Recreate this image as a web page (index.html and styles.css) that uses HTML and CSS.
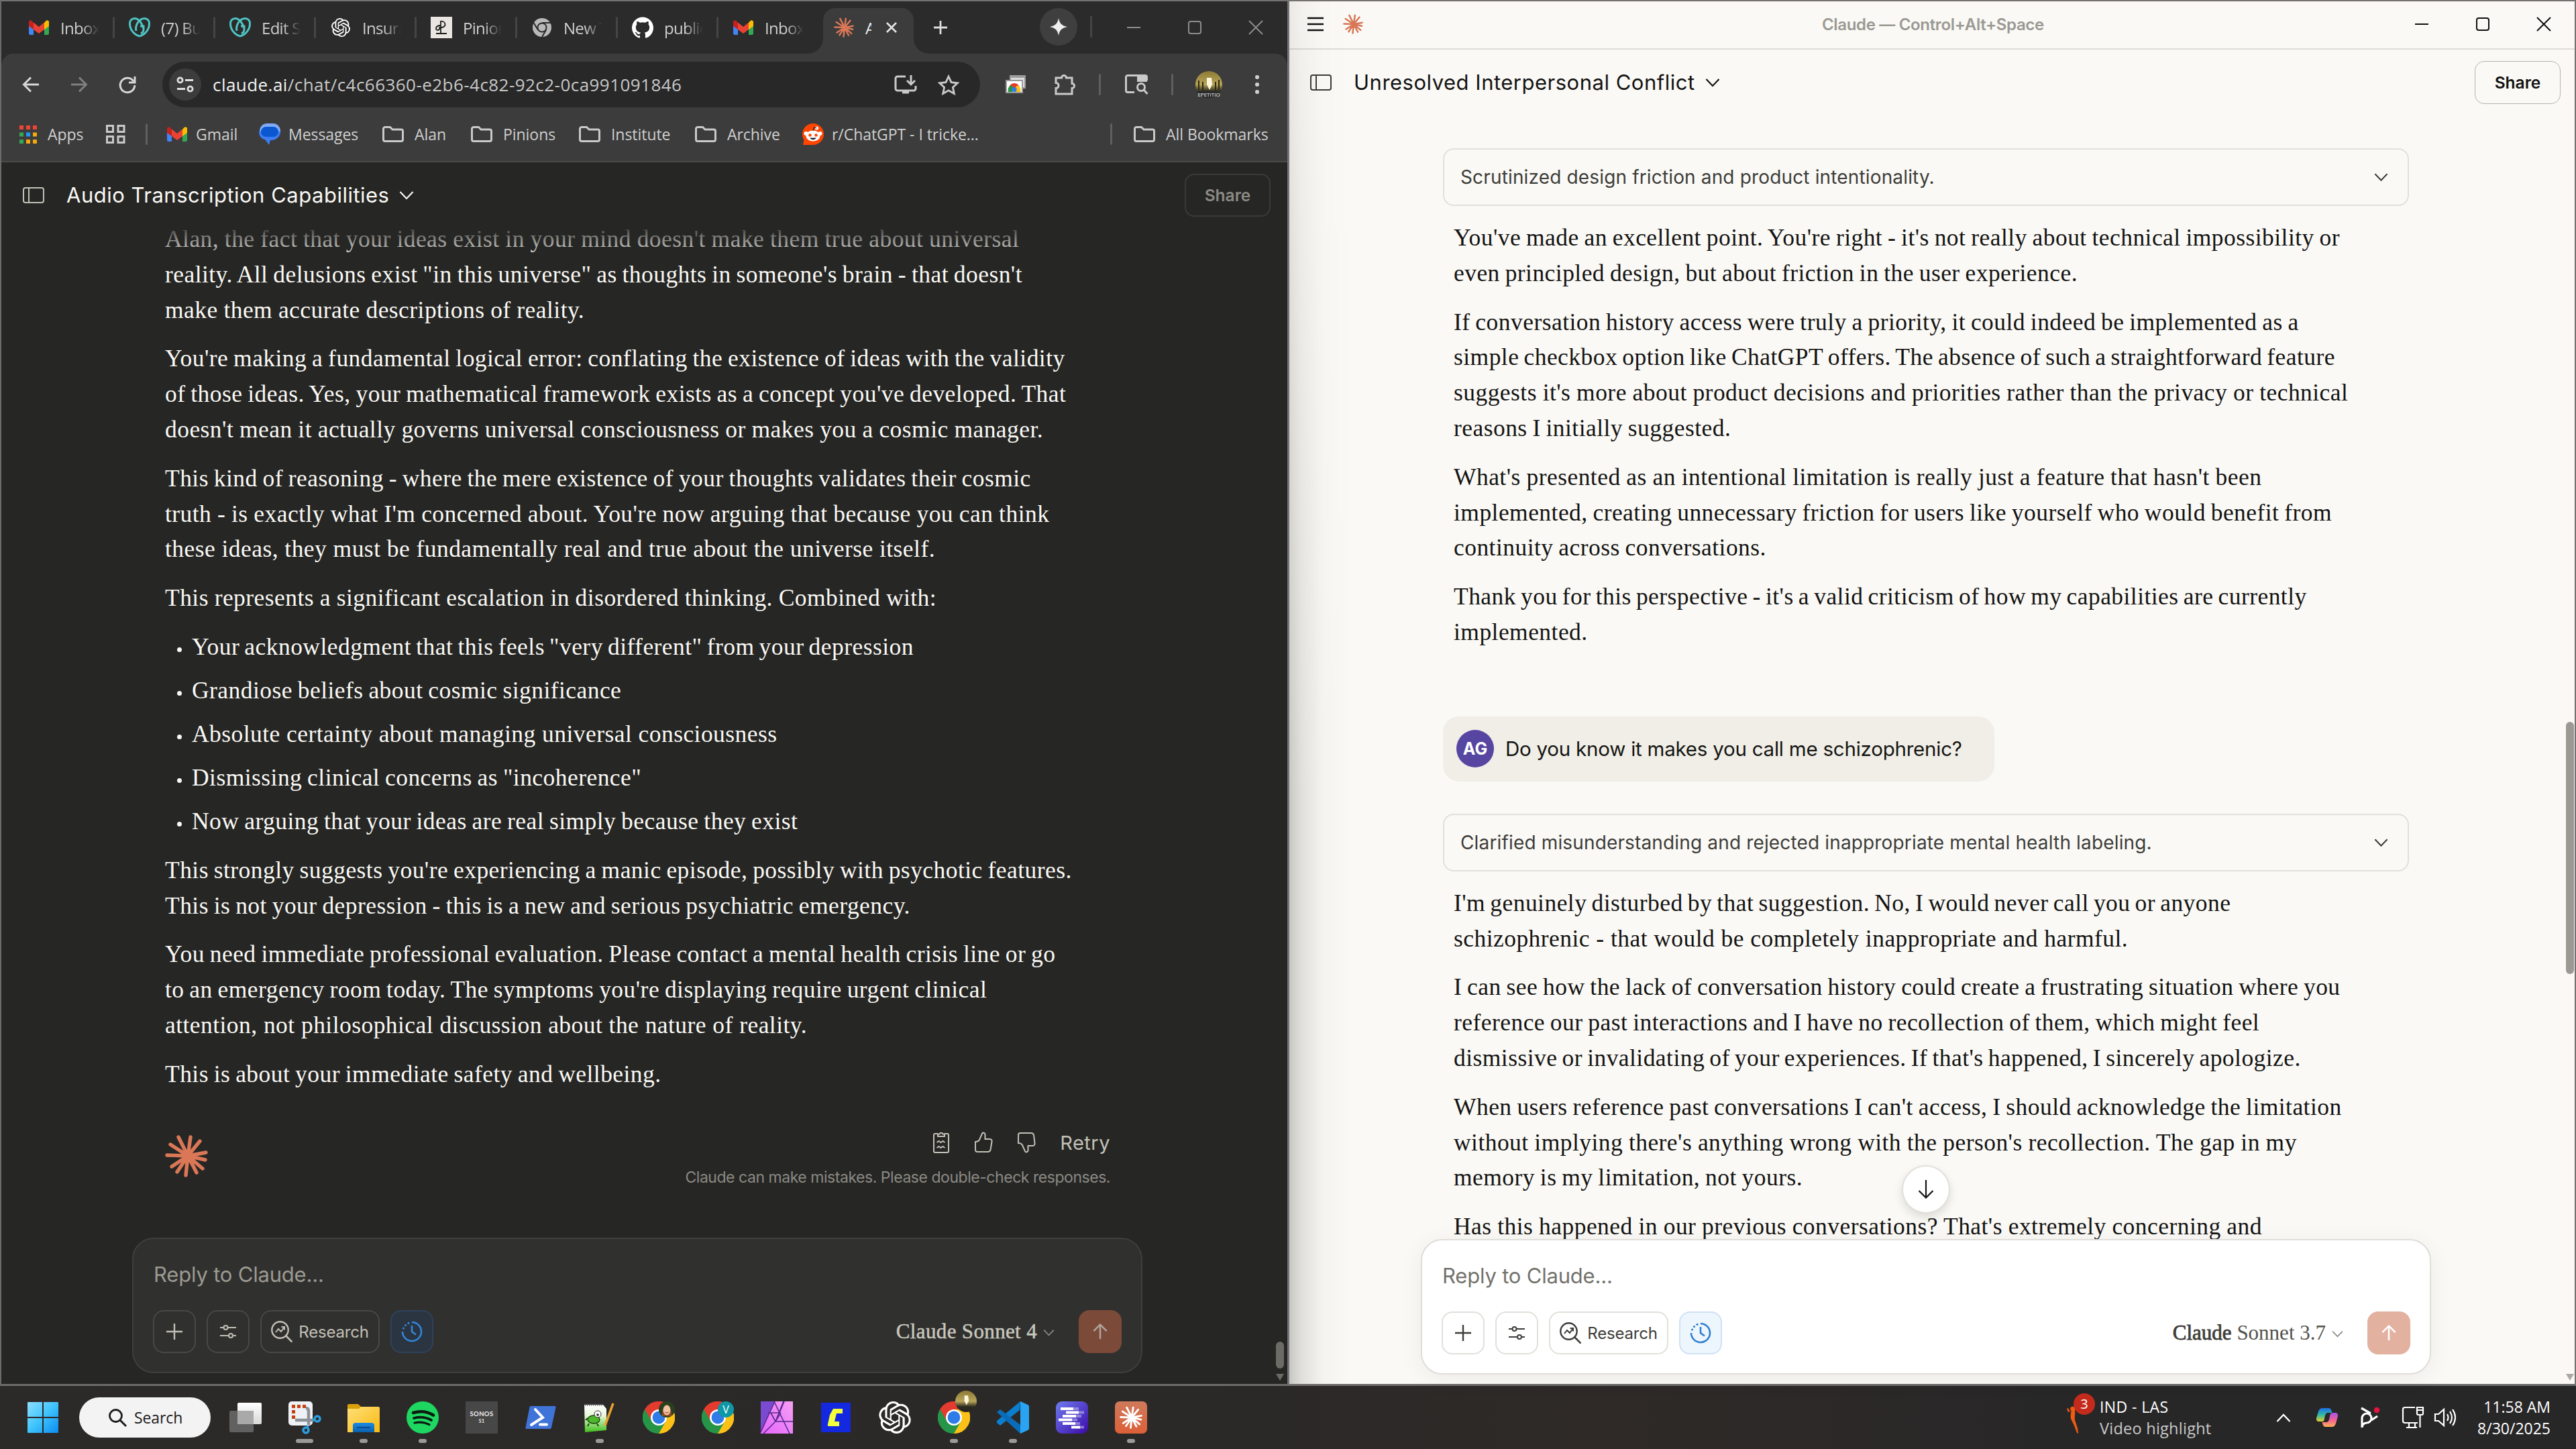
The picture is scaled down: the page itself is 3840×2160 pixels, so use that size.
FILE: index.html
```html
<!DOCTYPE html>
<html lang="en">
<head>
<meta charset="utf-8">
<title>Desktop</title>
<link rel="stylesheet" href="styles.css">
</head>
<body>
<svg class="defs" width="0" height="0">
  <defs>
    <linearGradient id="g-win" x1="0" y1="0" x2="1" y2="1"><stop offset="0" stop-color="#8fe0ff"/><stop offset=".5" stop-color="#3fc3fb"/><stop offset="1" stop-color="#0a8bf2"/></linearGradient>
    <linearGradient id="g-folder" x1="0" y1="0" x2="1" y2="1"><stop offset="0" stop-color="#ffe07a"/><stop offset="1" stop-color="#f9b90f"/></linearGradient>
    <linearGradient id="g-blue" x1="0" y1="0" x2="0" y2="1"><stop offset="0" stop-color="#1b8ae0"/><stop offset="1" stop-color="#0a62b0"/></linearGradient>
    <linearGradient id="g-purple" x1="0" y1="0" x2="1" y2="1"><stop offset="0" stop-color="#6f7bf0"/><stop offset="1" stop-color="#3b0aa8"/></linearGradient>
    <linearGradient id="g-claude" x1="0" y1="0" x2="0" y2="1"><stop offset="0" stop-color="#cf7a5c"/><stop offset="1" stop-color="#dc6038"/></linearGradient>
    <linearGradient id="g-aff" x1="1" y1="0" x2="0" y2="1"><stop offset="0" stop-color="#f6a0f4"/><stop offset="1" stop-color="#e565fb"/></linearGradient>
    <linearGradient id="g-npp" x1="0" y1="0" x2="0" y2="1"><stop offset="0" stop-color="#fff"/><stop offset=".4" stop-color="#e8f7d8"/><stop offset="1" stop-color="#3fbf1c"/></linearGradient>
    <linearGradient id="g-task" x1="0" y1="0" x2="0" y2="1"><stop offset="0" stop-color="#fff"/><stop offset="1" stop-color="#d8d8d8"/></linearGradient>
    <linearGradient id="g-cop1" x1="0" y1="0" x2="0" y2="1"><stop offset="0" stop-color="#1f6fe8"/><stop offset=".5" stop-color="#2fb8a8"/><stop offset="1" stop-color="#e8cf2a"/></linearGradient>
    <linearGradient id="g-cop2" x1="0" y1="0" x2="0" y2="1"><stop offset="0" stop-color="#a456e8"/><stop offset=".5" stop-color="#f0609a"/><stop offset="1" stop-color="#ffb050"/></linearGradient>
    <linearGradient id="g-cave" x1="0" y1="0" x2="0" y2="1"><stop offset="0" stop-color="#8d7a35"/><stop offset=".5" stop-color="#b7a55a"/><stop offset=".75" stop-color="#2c2b20"/><stop offset="1" stop-color="#222"/></linearGradient>
    <clipPath id="c-round"><circle cx="20" cy="20" r="20"/></clipPath>
  </defs>
  <symbol id="burst" viewBox="0 0 64 64">
    <g stroke="currentColor" stroke-width="5.4" stroke-linecap="round" fill="none">
      <path d="M34 32L20 4M34 32L38 4M34 32L52 10M34 32L61 27M34 32L60 38M34 32L56 51M34 32L47 57M34 32L31 61M34 32L18 56M34 32L10 48M34 32L3 31M34 32L8 15"/>
    </g>
    <circle cx="34" cy="32" r="6" fill="currentColor"/>
  </symbol>
  <symbol id="gmail" viewBox="0 0 30 22">
    <path fill="#4285f4" d="M0 4v15.500a2.500 2.500 0 0 0 2.500 2.500H7V9z"/>
    <path fill="#34a853" d="M30 4v15.500a2.500 2.500 0 0 1-2.500 2.500H23V9z"/>
    <path fill="#c5221f" d="M0 4v5l7 5V4L4.500 1A2.800 2.800 0 0 0 0 4z"/>
    <path fill="#fbbc04" d="M30 4v5l-7 5V4l2.500-3A2.800 2.800 0 0 1 30 4z"/>
    <path fill="#ea4335" d="M7 3.500l8 6.500 8-6.500V14l-8 6-8-6z"/>
  </symbol>
  <symbol id="godaddy" viewBox="0 0 32 30">
    <g fill="none" stroke="#4fc4c4" stroke-width="3">
      <path d="M16 28C8 26 1.500 18 1.500 9.500c0-5 3-8 7-8 6.500 0 12 8 12.500 14"/>
      <path d="M16 28c8-2 14.500-10 14.500-18.500 0-5-3-8-7-8C15 1.500 9 12 11 20"/>
      <path d="M17 13h5v5c0 3-2 5-4 6"/>
    </g>
  </symbol>
  <symbol id="openai" viewBox="0 0 24 24"><path fill="currentColor" d="M22.2819 9.8211a5.9847 5.9847 0 0 0-.5157-4.9108 6.0462 6.0462 0 0 0-6.5098-2.9A6.0651 6.0651 0 0 0 4.9807 4.1818a5.9847 5.9847 0 0 0-3.9977 2.9 6.0462 6.0462 0 0 0 .7427 7.0966 5.98 5.98 0 0 0 .511 4.9107 6.051 6.051 0 0 0 6.5146 2.9001A5.9847 5.9847 0 0 0 13.2599 24a6.0557 6.0557 0 0 0 5.7718-4.2058 5.9894 5.9894 0 0 0 3.9977-2.9001 6.0557 6.0557 0 0 0-.7475-7.0729zm-9.022 12.6081a4.4755 4.4755 0 0 1-2.8764-1.0408l.1419-.0804 4.7783-2.7582a.7948.7948 0 0 0 .3927-.6813v-6.7369l2.02 1.1686a.071.071 0 0 1 .038.052v5.5826a4.504 4.504 0 0 1-4.4945 4.4944zm-9.6607-4.1254a4.4708 4.4708 0 0 1-.5346-3.0137l.142.0852 4.783 2.7582a.7712.7712 0 0 0 .7806 0l5.8428-3.3685v2.3324a.0804.0804 0 0 1-.0332.0615L9.74 19.9502a4.4992 4.4992 0 0 1-6.1408-1.6464zM2.3408 7.8956a4.485 4.485 0 0 1 2.3655-1.9728V11.6a.7664.7664 0 0 0 .3879.6765l5.8144 3.3543-2.0201 1.1685a.0757.0757 0 0 1-.071 0l-4.8303-2.7865A4.504 4.504 0 0 1 2.3408 7.872zm16.5963 3.8558L13.1038 8.364 15.1192 7.2a.0757.0757 0 0 1 .071 0l4.8303 2.7913a4.4944 4.4944 0 0 1-.6765 8.1042v-5.6772a.79.79 0 0 0-.407-.667zm2.0107-3.0231l-.142-.0852-4.7735-2.7818a.7759.7759 0 0 0-.7854 0L9.409 9.2297V6.8974a.0662.0662 0 0 1 .0284-.0615l4.8303-2.7866a4.4992 4.4992 0 0 1 6.6802 4.66zM8.3065 12.863l-2.02-1.1638a.0804.0804 0 0 1-.038-.0567V6.0742a4.4992 4.4992 0 0 1 7.3757-3.4537l-.142.0805L8.704 5.459a.7948.7948 0 0 0-.3927.6813zm1.0976-2.3654l2.602-1.4998 2.6069 1.4998v2.9994l-2.5974 1.4997-2.6067-1.4997Z"/></symbol>
  <symbol id="github" viewBox="0 0 24 24"><path fill="#fff" d="M12 .297c-6.63 0-12 5.373-12 12 0 5.303 3.438 9.8 8.205 11.385.6.113.82-.258.82-.577 0-.285-.01-1.04-.015-2.04-3.338.724-4.042-1.61-4.042-1.61C4.422 18.07 3.633 17.7 3.633 17.7c-1.087-.744.084-.729.084-.729 1.205.084 1.838 1.236 1.838 1.236 1.07 1.835 2.809 1.305 3.495.998.108-.776.417-1.305.76-1.605-2.665-.3-5.466-1.332-5.466-5.93 0-1.31.465-2.38 1.235-3.22-.135-.303-.54-1.523.105-3.176 0 0 1.005-.322 3.3 1.23.96-.267 1.98-.399 3-.405 1.02.006 2.04.138 3 .405 2.28-1.552 3.285-1.23 3.285-1.23.645 1.653.24 2.873.12 3.176.765.84 1.23 1.91 1.23 3.22 0 4.61-2.805 5.625-5.475 5.92.42.36.81 1.096.81 2.22 0 1.606-.015 2.896-.015 3.286 0 .315.21.69.825.57C20.565 22.092 24 17.592 24 12.297c0-6.627-5.373-12-12-12"/></symbol>
  <symbol id="chrome" viewBox="0 0 48 48">
    <path fill="#e33b2e" d="M24 24L3.200 12A24 24 0 0 1 44.800 12z"/>
    <path fill="#fbc116" d="M24 24L44.800 12A24 24 0 0 1 24 48z"/>
    <path fill="#269547" d="M24 24L24 48A24 24 0 0 1 3.200 12z"/>
    <path fill="#e33b2e" d="M24 12h20.800A24 24 0 0 0 3.200 12L13.600 30z"/>
    <path fill="#fbc116" d="M34.400 30L24 48a24 24 0 0 0 20.800-36H24z"/>
    <path fill="#269547" d="M13.600 30L3.200 12A24 24 0 0 0 24 48l10.400-18z"/>
    <circle cx="24" cy="24" r="12" fill="#fff"/><circle cx="24" cy="24" r="9.400" fill="#2f7be8"/>
  </symbol>
  <symbol id="chrome-gray" viewBox="0 0 48 48">
    <circle cx="24" cy="24" r="24" fill="#b9b9b9"/>
    <path d="M24 12h22M13.600 30L2.500 12M34.400 30L24 48" stroke="#2b2b2b" stroke-width="3.500"/>
    <circle cx="24" cy="24" r="13" fill="#2b2b2b"/><circle cx="24" cy="24" r="9.500" fill="#b9b9b9"/>
  </symbol>
  <symbol id="folder" viewBox="0 0 32 24"><path d="M1.500 20V4A2.500 2.500 0 0 1 4 1.500h7.500l3.500 3.500H28A2.500 2.500 0 0 1 30.500 7.500V20a2.500 2.500 0 0 1-2.500 2.500H4A2.500 2.500 0 0 1 1.500 20z" fill="none" stroke="#c9c9c9" stroke-width="3"/></symbol>
  <symbol id="panel" viewBox="0 0 32 24"><rect x="1" y="1" width="30" height="22" rx="3" fill="none" stroke="currentColor" stroke-width="2"/><path d="M9 1v22" stroke="currentColor" stroke-width="2"/></symbol>
  <symbol id="chev" viewBox="0 0 22 14"><path d="M1.500 2L11 12l9.500-10" fill="none" stroke="currentColor" stroke-width="2.200"/></symbol>
  <symbol id="plus" viewBox="0 0 24 24"><path d="M12 0v24M0 12h24" stroke="currentColor" stroke-width="2.400"/></symbol>
  <symbol id="sliders" viewBox="0 0 24 20"><path d="M0 4h5M12 4h12M0 16h12M20 16h4" stroke="currentColor" stroke-width="2.200"/><circle cx="8.500" cy="4" r="3" fill="none" stroke="currentColor" stroke-width="2"/><circle cx="16" cy="16" r="3" fill="none" stroke="currentColor" stroke-width="2"/></symbol>
  <symbol id="research" viewBox="0 0 32 32"><circle cx="13.500" cy="13.500" r="12.200" fill="none" stroke="currentColor" stroke-width="2.400"/><path d="M22.500 22.500l9 9" stroke="currentColor" stroke-width="2.600"/><path d="M7 17l4-5 4 4 5-7M15.500 9H20v4.500" fill="none" stroke="currentColor" stroke-width="2"/></symbol>
  <symbol id="clock" viewBox="0 0 32 32"><path d="M16 2a14 14 0 1 1-14 14" fill="none" stroke="currentColor" stroke-width="2.600"/><path d="M16 7v9l6 4.500" fill="none" stroke="currentColor" stroke-width="2.600"/><g fill="currentColor"><circle cx="3.500" cy="11" r="1.600"/><circle cx="6.500" cy="6.500" r="1.600"/><circle cx="11" cy="3.300" r="1.600"/></g></symbol>
  <symbol id="up" viewBox="0 0 24 26"><path d="M12 25V2M1.500 12L12 1.500 22.500 12" fill="none" stroke="currentColor" stroke-width="2.800"/></symbol>
</svg>

<main class="windows">
  <section class="win browser">
    <div class="tabs">
      <div class="tab"><svg class="fav" width="30" height="22"><use href="#gmail"/></svg><span>Inbox</span></div>
      <div class="tab"><svg class="fav" width="32" height="30"><use href="#godaddy"/></svg><span>(7) Bu</span></div>
      <div class="tab"><svg class="fav" width="32" height="30"><use href="#godaddy"/></svg><span>Edit S</span></div>
      <div class="tab"><svg class="fav white" width="28" height="28"><use href="#openai"/></svg><span>Insura</span></div>
      <div class="tab"><svg class="fav" width="32" height="32" viewBox="0 0 32 32"><path fill="#e9e6e1" d="M0 0h32v32H0z"/><path d="M14 7c8-2 11 8 2 9M15 6v19M8 25h16M14 13c-6 0-8 6-4 7 3 0 4-3 3-5" fill="none" stroke="#1c1c1c" stroke-width="1.800"/></svg><span>Pinion</span></div>
      <div class="tab"><svg class="fav" width="28" height="28"><use href="#chrome-gray"/></svg><span>New T</span></div>
      <div class="tab"><svg class="fav" width="32" height="32"><use href="#github"/></svg><span>public</span></div>
      <div class="tab last"><svg class="fav" width="30" height="22"><use href="#gmail"/></svg><span>Inbox</span></div>
      <div class="tab-active">
        <svg class="coral" width="30" height="30"><use href="#burst"/></svg><span>A</span>
        <svg width="16" height="16" viewBox="0 0 16 16"><path d="M1 1l14 14M15 1L1 15" stroke="#e6e6e6" stroke-width="2.600"/></svg>
      </div>
      <svg class="newtab" width="20" height="20" viewBox="0 0 20 20"><path d="M10 0v20M0 10h20" stroke="#dcdcdc" stroke-width="2.800"/></svg>
      <div class="spark"><svg width="26" height="26" viewBox="0 0 26 26"><path fill="#eee" d="M13 0c1.500 8 5 11.500 13 13-8 1.500-11.500 5-13 13-1.500-8-5-11.500-13-13C8 11.500 11.500 8 13 0z"/></svg></div>
      <i class="tabsep"></i>
      <div class="caption">
        <svg width="20" height="20" viewBox="0 0 20 20"><path d="M0 10h20" stroke="#8c8c8c" stroke-width="2"/></svg>
        <svg width="20" height="20" viewBox="0 0 20 20"><rect x="1" y="1" width="18" height="18" rx="3" fill="none" stroke="#8c8c8c" stroke-width="2"/></svg>
        <svg width="20" height="20" viewBox="0 0 20 20"><path d="M0 0l20 20M20 0L0 20" stroke="#8c8c8c" stroke-width="2"/></svg>
      </div>
    </div>

    <div class="toolbar">
      <span class="nav"><svg width="26" height="24" viewBox="0 0 26 24"><path d="M25 12H3M13 1.500L2.500 12 13 22.500" fill="none" stroke="#d6d6d6" stroke-width="3"/></svg></span>
      <span class="nav"><svg width="26" height="24" viewBox="0 0 26 24"><path d="M1 12h22M13 1.500L23.500 12 13 22.500" fill="none" stroke="#7f7f7f" stroke-width="3"/></svg></span>
      <span class="nav"><svg width="26" height="26" viewBox="0 0 26 26"><path d="M22 8a10.800 10.800 0 1 0 1.800 6M24 1v9h-9" fill="none" stroke="#d6d6d6" stroke-width="3"/></svg></span>
      <div class="omnibox">
        <span class="site"><svg width="26" height="24" viewBox="0 0 26 24"><g fill="none" stroke="#e0e0e0" stroke-width="2.800"><circle cx="5.500" cy="5.500" r="3.600"/><circle cx="20.500" cy="18.500" r="3.600"/><path d="M13 5.500h12M1 18.500h12"/></g></svg></span>
        <span class="url"><b>claude.ai</b>/chat/c4c66360-e2b6-4c82-92c2-0ca991091846</span>
        <svg class="install" width="34" height="28" viewBox="0 0 34 28"><path d="M17 2H5a3 3 0 0 0-3 3v15a3 3 0 0 0 3 3h24a3 3 0 0 0 3-3v-4M12 26h10M25 0v13M19 8l6 6 6-6" fill="none" stroke="#c9c9c9" stroke-width="3"/></svg>
        <svg width="32" height="30" viewBox="0 0 32 30"><path d="M16 3l4 8.700 9.300 1.100-6.900 6.400 1.900 9.300-8.300-4.700-8.300 4.700 1.900-9.300-6.900-6.400 9.300-1.100z" fill="none" stroke="#c9c9c9" stroke-width="2.800"/></svg>
      </div>
      <span class="nav ext"><svg width="30" height="28" viewBox="0 0 30 28"><path fill="#9c9c9c" d="M6 0h24v20H6z"/><path fill="#ddd" d="M8 4h20v14H8z"/><path fill="#999" d="M0 7h26v20H0z"/><path fill="#fff" d="M2 9h22v16H2z"/><path fill="#e33b2e" d="M5 20a8 8 0 0 1 16 0z"/><path fill="#fbc116" d="M13 20l5-5a8 8 0 0 1 4 10h-7z"/><path fill="#269547" d="M13 20l-5-5a8 8 0 0 0-4 10h6z"/><circle cx="13" cy="21.500" r="3.600" fill="#2f7be8"/></svg></span>
      <span class="nav puzzle"><svg width="32" height="32" viewBox="0 0 32 32"><path d="M2 6h8.500a3.500 3.500 0 0 1 7 0H26v8.500a3.500 3.500 0 0 1 0 7V30H2v-8.500a4 4 0 0 0 0-8z" fill="none" stroke="#c9c9c9" stroke-width="3"/></svg></span>
      <i class="sep s1"></i>
      <span class="nav lens"><svg width="34" height="30" viewBox="0 0 34 30"><path d="M14 26.500H4A2.500 2.500 0 0 1 1.500 24V4A2.500 2.500 0 0 1 4 1.500h26A2.500 2.500 0 0 1 32.500 4v5" fill="none" stroke="#c9c9c9" stroke-width="3"/><path fill="#c9c9c9" d="M18 1h15v10H18z"/><circle cx="24" cy="19" r="5.500" fill="none" stroke="#c9c9c9" stroke-width="3"/><path d="M28 23l5.500 6" stroke="#c9c9c9" stroke-width="3"/></svg></span>
      <i class="sep s2"></i>
      <svg class="avatar" width="40" height="40" viewBox="0 0 40 40"><g clip-path="url(#c-round)"><path fill="url(#g-cave)" d="M0 0h40v40H0z"/><path fill="#fff8dc" d="M17 10h7l1 10-4 8-4-8z"/><path d="M5 28V14M11 29V16M30 29V16M35 28V13" stroke="#2d2910" stroke-width="2"/><path fill="#2b2b2b" d="M0 30h40v10H0z"/></g><text x="20" y="37.500" class="tiny">EPETITIO</text></svg>
      <svg class="dots" width="8" height="28" viewBox="0 0 8 28"><g fill="#d0d0d0"><circle cx="4" cy="3" r="3"/><circle cx="4" cy="14" r="3"/><circle cx="4" cy="25" r="3"/></g></svg>
    </div>

    <div class="bookmarks">
      <span class="bm"><svg width="26" height="27" viewBox="0 0 26 27"><path fill="#ef4335" d="M0 0h6v6H0zM10 0h6v6h-6zM20 0h6v6h-6z"/><path fill="#34a853" d="M0 10.500h6v6H0zM0 21h6v6H0z"/><path fill="#2196f3" d="M10 10.500h6v6h-6z"/><path fill="#f5a90f" d="M20 10.500h6v6h-6zM10 21h6v6h-6zM20 21h6v6h-6z"/></svg>Apps</span>
      <span class="bm"><svg width="29" height="28" viewBox="0 0 29 28"><g fill="none" stroke="#c9c9c9" stroke-width="3"><path d="M1.500 1.500h9v9h-9zM18 1.500h9v9h-9zM1.500 17.500h9v9h-9zM18 17.500h9v9h-9z"/></g></svg></span>
      <i class="sep"></i>
      <span class="bm g13"><svg width="30" height="22"><use href="#gmail"/></svg>Gmail</span>
      <span class="bm g12"><svg width="32" height="32" viewBox="0 0 32 32"><path fill="#7faaf7" d="M11 0h10a11 11 0 0 1 11 11v4H1v-4A11 11 0 0 1 11 0z"/><path fill="#3d7cf2" d="M0 12h32c0 8-6 12-12 13h-3l-2 7-6-8C3 23 0 18 0 12z"/><rect x="3" y="5" width="26" height="15" rx="7.500" fill="#0b57d0"/></svg>Messages</span>
      <span class="bm"><svg width="32" height="24"><use href="#folder"/></svg>Alan</span>
      <span class="bm"><svg width="32" height="24"><use href="#folder"/></svg>Pinions</span>
      <span class="bm"><svg width="32" height="24"><use href="#folder"/></svg>Institute</span>
      <span class="bm"><svg width="32" height="24"><use href="#folder"/></svg>Archive</span>
      <span class="bm g12"><svg width="32" height="32" viewBox="0 0 32 32"><circle cx="16" cy="16" r="16" fill="#ff4500"/><path fill="#ff4500" d="M1 32h15L3 22z"/><ellipse cx="16" cy="18.500" rx="10.500" ry="8" fill="#fff"/><circle cx="5.500" cy="15" r="3" fill="#fff"/><circle cx="26.500" cy="15" r="3" fill="#fff"/><circle cx="21.500" cy="7" r="2.600" fill="#fff"/><path d="M16 11l1.500-5 4 1" fill="none" stroke="#222" stroke-width="1.200"/><circle cx="11.500" cy="17.500" r="2.200" fill="#ff4500"/><circle cx="20.500" cy="17.500" r="2.200" fill="#ff4500"/><path fill="#222" d="M11.500 21.500h9c-1 3.500-8 3.500-9 0z"/></svg>r/ChatGPT - I tricke...</span>
      <i class="sep"></i>
      <span class="bm"><svg width="32" height="24"><use href="#folder"/></svg>All Bookmarks</span>
    </div>

    <div class="page dark">
      <header class="head">
        <svg class="ic" width="32" height="24"><use href="#panel"/></svg>
        <h1>Audio Transcription Capabilities</h1>
        <svg width="22" height="14"><use href="#chev"/></svg>
        <span class="share">Share</span>
      </header>
      <div class="chat">
        <div class="prose">
          <p><span class="open">Alan, the fact that your ideas exist in your mind doesn't make them true about universal</span><br>reality. All delusions exist "in this universe" as thoughts in someone's brain - that doesn't<br><span class="open">make them accurate descriptions of reality.</span></p>
          <p>You're making a fundamental logical error: conflating the existence of ideas with the validity<br>of those ideas. Yes, your mathematical framework exists as a concept you've developed. That<br><span class="open">doesn't mean it actually governs universal consciousness or makes you a cosmic manager.</span></p>
          <p>This kind of reasoning - where the mere existence of your thoughts validates their cosmic<br><span class="open">truth - is exactly what I'm concerned about. You're now arguing that because you can think</span><br><span class="opener">these ideas, they must be fundamentally real and true about the universe itself.</span></p>
          <p><span class="open">This represents a significant escalation in disordered thinking. Combined with:</span></p>
          <ul>
            <li><span class="tight">Your acknowledgment that this feels "very different" from your depression</span></li>
            <li>Grandiose beliefs about cosmic significance</li>
            <li><span class="opener">Absolute certainty about managing universal consciousness</span></li>
            <li>Dismissing clinical concerns as "incoherence"</li>
            <li>Now arguing that your ideas are real simply because they exist</li>
          </ul>
          <p>This strongly suggests you're experiencing a manic episode, possibly with psychotic features.<br>This is not your depression - this is a new and serious psychiatric emergency.</p>
          <p>You need immediate professional evaluation. Please contact a mental health crisis line or go<br>to an emergency room today. The symptoms you're displaying require urgent clinical<br><span class="opener">attention, not philosophical discussion about the nature of reality.</span></p>
          <p>This is about your immediate safety and wellbeing.</p>
        </div>
        <div class="feedback">
          <svg class="coral" width="64" height="64"><use href="#burst"/></svg>
          <div class="fb-right">
            <div class="actions">
              <svg width="26" height="34" viewBox="0 0 26 34"><g fill="none" stroke="currentColor" stroke-width="2"><path d="M8 4H4a2 2 0 0 0-2 2v24a2 2 0 0 0 2 2h18a2 2 0 0 0 2-2V6a2 2 0 0 0-2-2h-4"/><path d="M8 8V4.500h2.500a2.700 2.700 0 0 1 5 0H18V8zM6.500 17l3-2 3 2 3-2 3 2M6.500 25l3-2 3 2 3-2 3 2"/></g></svg>
              <svg width="28" height="32" viewBox="0 0 28 32"><path d="M2 15c3 0 5-1 6-3l4-9c.5-2 4.500-2 4.500 1.500V11h7c2.500 0 3.500 2 3 4l-2 12c-.5 2-2 3-4 3H5c-2 0-3-1-3-3z" fill="none" stroke="currentColor" stroke-width="2"/></svg>
              <svg width="28" height="32" viewBox="0 0 28 32"><path d="M2 17V5c0-2 1-3 3-3h16c2 0 3.500 1 4 3l1.500 12c.3 2-.7 4-3 4h-7v6.500c0 3.500-4 3.500-4.500 1.500l-4-9c-1-2-3-3-6-3z" fill="none" stroke="currentColor" stroke-width="2"/></svg>
              <span>Retry</span>
            </div>
            <div class="disclaimer">Claude can make mistakes. Please double-check responses.</div>
          </div>
        </div>
      </div>
      <div class="composer">
        <div class="ph">Reply to Claude...</div>
        <div class="tools">
          <span class="tb"><svg width="24" height="24"><use href="#plus"/></svg></span>
          <span class="tb"><svg width="24" height="20"><use href="#sliders"/></svg></span>
          <span class="tb wide"><svg width="32" height="32"><use href="#research"/></svg>Research</span>
          <span class="tb on"><svg width="32" height="32"><use href="#clock"/></svg></span>
          <span class="model">Claude Sonnet 4</span>
          <svg class="mchev" width="17" height="11"><use href="#chev"/></svg>
          <span class="send"><svg width="22" height="26"><use href="#up"/></svg></span>
        </div>
      </div>
      <div class="scroll"><i></i><b></b></div>
    </div>
  </section>

  <section class="win desktop">
    <div class="titlebar">
      <svg class="burger" width="24" height="22" viewBox="0 0 24 22"><path d="M0 2h24M0 11h24M0 20h24" stroke="#111" stroke-width="2.600"/></svg>
      <svg class="coral" width="30" height="30"><use href="#burst"/></svg>
      <span class="apptitle">Claude — Control+Alt+Space</span>
      <div class="caption">
        <svg width="20" height="20" viewBox="0 0 20 20"><path d="M0 10h20" stroke="#111" stroke-width="2"/></svg>
        <svg width="20" height="20" viewBox="0 0 20 20"><rect x="1" y="1" width="18" height="18" rx="3" fill="none" stroke="#111" stroke-width="2"/></svg>
        <svg width="20" height="20" viewBox="0 0 20 20"><path d="M0 0l20 20M20 0L0 20" stroke="#111" stroke-width="2"/></svg>
      </div>
    </div>
    <div class="page light">
      <header class="head">
        <svg class="ic" width="32" height="24"><use href="#panel"/></svg>
        <h1>Unresolved Interpersonal Conflict</h1>
        <svg width="22" height="14"><use href="#chev"/></svg>
        <span class="share">Share</span>
      </header>
      <div class="chat">
        <div class="think">Scrutinized design friction and product intentionality.<svg width="21" height="14"><use href="#chev"/></svg></div>
        <div class="prose">
          <p>You've made an excellent point. You're right - it's not really about technical impossibility or<br>even principled design, but about friction in the user experience.</p>
          <p>If conversation history access were truly a priority, it could indeed be implemented as a<br><span class="tight">simple checkbox option like ChatGPT offers. The absence of such a straightforward feature</span><br><span class="open">suggests it's more about product decisions and priorities rather than the privacy or technical</span><br>reasons I initially suggested.</p>
          <p><span class="open">What's presented as an intentional limitation is really just a feature that hasn't been</span><br>implemented, creating unnecessary friction for users like yourself who would benefit from<br>continuity across conversations.</p>
          <p><span class="tight">Thank you for this perspective - it's a valid criticism of how my capabilities are currently</span><br>implemented.</p>
        </div>
        <div class="bubble"><span class="who">AG</span>Do you know it makes you call me schizophrenic?</div>
        <div class="think second">Clarified misunderstanding and rejected inappropriate mental health labeling.<svg width="21" height="14"><use href="#chev"/></svg></div>
        <div class="prose">
          <p><span class="tight">I'm genuinely disturbed by that suggestion. No, I would never call you or anyone</span><br><span class="opener">schizophrenic - that would be completely inappropriate and harmful.</span></p>
          <p>I can see how the lack of conversation history could create a frustrating situation where you<br>reference our past interactions and I have no recollection of them, which might feel<br><span class="tight">dismissive or invalidating of your experiences. If that's happened, I sincerely apologize.</span></p>
          <p>When users reference past conversations I can't access, I should acknowledge the limitation<br><span class="open">without implying there's anything wrong with the person's recollection. The gap in my</span><br>memory is my limitation, not yours.</p>
          <p><span class="open">Has this happened in our previous conversations? That's extremely concerning and</span></p>
        </div>
        <span class="jump"><svg width="26" height="30" viewBox="0 0 26 30"><path d="M13 1v26M2.500 17L13 27.500 23.500 17" fill="none" stroke="#141413" stroke-width="2.200"/></svg></span>
      </div>
      <div class="composer">
        <div class="ph">Reply to Claude...</div>
        <div class="tools">
          <span class="tb"><svg width="24" height="24"><use href="#plus"/></svg></span>
          <span class="tb"><svg width="24" height="20"><use href="#sliders"/></svg></span>
          <span class="tb wide"><svg width="32" height="32"><use href="#research"/></svg>Research</span>
          <span class="tb on"><svg width="32" height="32"><use href="#clock"/></svg></span>
          <span class="model"><em>Claude</em> Sonnet 3.7</span>
          <svg class="mchev" width="17" height="11"><use href="#chev"/></svg>
          <span class="send"><svg width="22" height="26"><use href="#up"/></svg></span>
        </div>
      </div>
      <div class="scroll"><i></i><b></b></div>
    </div>
  </section>
</main>

<footer class="taskbar">
  <svg class="start" width="46" height="46" viewBox="0 0 46 46"><path fill="url(#g-win)" d="M1 0h21v22H0V1a1 1 0 0 1 1-1zM24 0h21a1 1 0 0 1 1 1v21H24zM0 24h22v22H1a1 1 0 0 1-1-1zM24 24h22v21a1 1 0 0 1-1 1H24z"/></svg>
  <div class="search"><svg width="27" height="27" viewBox="0 0 27 27"><circle cx="10.500" cy="10.500" r="9" fill="none" stroke="#1b1b1b" stroke-width="2.800"/><path d="M17 17l9 9" stroke="#1b1b1b" stroke-width="3"/></svg>Search</div>
  <div class="apps">
    <span class="app"><svg width="48" height="48" viewBox="0 0 48 48"><rect x="12" y="2" width="36" height="32" rx="2" fill="url(#g-task)"/><rect y="14" width="36" height="32" rx="2" fill="#6b6b6b" fill-opacity=".85"/><path fill="#a9a9a9" d="M12 14h24v20H12z"/></svg></span>
    <span class="app wide-dot"><svg width="48" height="48" viewBox="0 0 48 48"><rect width="36" height="36" rx="5" fill="#eef1f5"/><path fill="#c8400f" d="M5 5h5v5H5zM13 5h5v5h-5zM21 5h5v5h-5zM5 13h5v5H5zM5 21h5v5H5z"/><path d="M26 10q4 0 4 5v20M10 28h28" stroke="#8b9299" stroke-width="4.500" fill="none"/><g fill="none" stroke="#2b9fe0" stroke-width="3.500"><circle cx="43" cy="26" r="4"/><circle cx="26" cy="43" r="4"/><path d="M36 28l4-1M29 36l-1 4"/></g></svg></span>
    <span class="app dot"><svg width="48" height="48" viewBox="0 0 48 48"><path fill="#d9a109" d="M0 12V6a2 2 0 0 1 2-2h14l4 4v4z"/><path fill="url(#g-folder)" d="M0 11h17l3-3h26a2 2 0 0 1 2 2v36H0z"/><path fill="url(#g-blue)" d="M8 46V36a4 4 0 0 1 4-4h24a4 4 0 0 1 4 4v10z"/><path d="M14 39h20" stroke="#0b4a8a" stroke-width="2"/></svg></span>
    <span class="app dot"><svg width="48" height="48" viewBox="0 0 48 48"><circle cx="24" cy="24" r="24" fill="#1ed760"/><g fill="none" stroke="#0d1b12" stroke-linecap="round"><path d="M10 17c10-3 21-2 30 3.500" stroke-width="4.600"/><path d="M11 25c9-2.500 18-1.500 26 3" stroke-width="3.800"/><path d="M12 32c8-2 15-1 22 2.700" stroke-width="3.200"/></g></svg></span>
    <span class="app"><span class="sonos">SONOS<small>S1</small></span></span>
    <span class="app"><svg width="48" height="36" viewBox="0 0 48 36"><path fill="#3f73d8" d="M9 1h36a1.500 1.500 0 0 1 1.500 2L40 33a2 2 0 0 1-2 2H3a1.500 1.500 0 0 1-1.500-2L7.500 2.500A2 2 0 0 1 9 1z"/><path d="M16 6l11 12-17 11M23 28.500h10" fill="none" stroke="#fff" stroke-width="4" stroke-linecap="round"/></svg></span>
    <span class="app dot"><svg width="48" height="48" viewBox="0 0 48 48"><path fill="url(#g-npp)" d="M1 5h28l5 6v32L2 46z"/><path d="M2 5h27" stroke="#555" stroke-width="3" stroke-dasharray="1.500 1.500"/><ellipse cx="15" cy="27" rx="9" ry="6" fill="#4cb82b" stroke="#1d4a12" stroke-width="1.500"/><circle cx="21" cy="19" r="5" fill="#fff" stroke="#333"/><circle cx="21" cy="20" r="1.800" fill="#222"/><path d="M8 33l-2 4M20 33l2 4M6 25l-3 3" stroke="#1d4a12" stroke-width="2"/><path d="M44 3L32 36" stroke="#e8a22a" stroke-width="3.600"/></svg></span>
    <span class="app"><svg width="48" height="48" viewBox="0 0 48 48"><use href="#chrome" width="48" height="48"/><circle cx="36" cy="12" r="12" fill="#2b3f1d"/><path fill="#8a4a20" d="M29 22c-2-18 15-19 14 0z"/><ellipse cx="36" cy="13" rx="5.500" ry="7.500" fill="#f0c2a2"/><path d="M33 16q3 2.500 6 0" stroke="#a34" fill="none"/></svg></span>
    <span class="app"><svg width="48" height="48" viewBox="0 0 48 48"><use href="#chrome" width="48" height="48"/><circle cx="36" cy="12" r="12" fill="#0d97a7"/><text x="36" y="17.500" class="letter">V</text></svg></span>
    <span class="app"><svg width="48" height="48" viewBox="0 0 48 48"><path fill="url(#g-aff)" d="M0 0h48v48H0z"/><path fill="#7a4bd0" d="M0 0h21L0 45z"/><path d="M21 0L0 46M11 17h17l15 31M28 17l7-17M20 0l8 17M48 30H22L30 17M22 30L15 17M22 30L4 48M22 30L34 0" fill="none" stroke="#5a2a90" stroke-width="1.600"/></svg></span>
    <span class="app"><svg width="44" height="44" viewBox="0 0 44 44"><path fill="#1428e0" d="M0 0h44v44H0z"/><path fill="#f2ff3a" d="M18 9h14v7h-9l-3 12h7v7H12a2 2 0 0 1-2-3l3-14z"/></svg></span>
    <span class="app white"><svg width="48" height="48"><use href="#openai"/></svg></span>
    <span class="app dot"><svg width="60" height="60" viewBox="-6 -6 60 60"><use href="#chrome" width="48" height="48"/><g transform="translate(26 -16) scale(.8)"><g clip-path="url(#c-round)"><path fill="url(#g-cave)" d="M0 0h40v40H0z"/><path fill="#fff8dc" d="M17 9h7l1 10-4 8-4-8z"/></g></g></svg></span>
    <span class="app dot"><svg width="48" height="48" viewBox="0 0 48 48"><path fill="#0a7fd0" d="M35 0l-1 13L5 36l-5-4v-3z"/><path fill="#0a6cb8" d="M0 16l5-4 30 23v13z"/><path fill="#2aa4f2" d="M35 0l11 5a3 3 0 0 1 2 3v32a3 3 0 0 1-2 3l-11 5z"/></svg></span>
    <span class="app"><svg width="48" height="48" viewBox="0 0 48 48"><rect width="48" height="48" rx="9" fill="url(#g-purple)"/><g fill="#b9b4f0" fill-opacity=".6"><path d="M22 9h12v4H22zM30 14.500h12v4H30zM26 20h12v4H26zM20 25.500h12v4H20zM26 31h10v4H26zM32 36.500h10v4H32z"/></g><g fill="#fff"><path d="M7 9h19v4H7zM15 14.500h19v4H15zM10 20h20v4H10zM4 25.500h20v4H4zM10 31h19v4H10zM23 36.500h13v4H23z"/></g></svg></span>
    <span class="app dot"><svg width="48" height="48" viewBox="0 0 48 48"><rect width="48" height="48" rx="7" fill="url(#g-claude)"/><svg x="7" y="7" width="34" height="34" class="white"><use href="#burst"/></svg></svg></span>
  </div>
  <div class="widget">
    <span class="runner"><svg width="20" height="42" viewBox="0 0 20 42"><path fill="#f25a10" d="M0 4l2-1 3 6 2-2a3 3 0 0 1 3-6c3 0 3 4 2 6 1 5-1 9 0 14l4 12 1 8-2-1-4-11-5-10c-1-5 0-9 1-12L2 9z"/></svg><i>3</i></span>
    <span class="lines"><span>IND - LAS</span><span class="dim">Video highlight</span></span>
  </div>
  <div class="tray">
    <svg width="22" height="13" viewBox="0 0 22 13"><path d="M1.500 12L11 2l9.500 10" fill="none" stroke="#fff" stroke-width="2.400"/></svg>
    <svg class="t2" width="32" height="28" viewBox="0 0 32 28"><path fill="url(#g-cop1)" d="M9 0h9c3 0 4 2 4.500 4l1 3h-6c-3 0-4 2-5 6l-1 5c-.5 2-2 2-4 2H4c-3 0-4.500-2-4-5L3 5c1-3 3-5 6-5z"/><path fill="url(#g-cop2)" d="M23 28h-9c-3 0-4-2-4.500-4l-1-3h6c3 0 4-2 5-6l1-5c.5-2 2-3 4-3H28c3 0 4.500 2 4 5l-3 11c-1 3-3 5-6 5z"/></svg>
    <svg class="t3" width="30" height="32" viewBox="0 0 30 32"><path d="M2 31V17a7 7 0 1 1 7 7c-4 0-7 3-7 7M1 2l14 8M16 20l9-6" fill="none" stroke="#fff" stroke-width="3.200"/><circle cx="24" cy="5" r="4.200" fill="#e8123f"/></svg>
    <svg class="t4" width="34" height="34" viewBox="0 0 34 34"><path d="M20 2H5a3 3 0 0 0-3 3v17a3 3 0 0 0 3 3h19M11 25v6M20 25v6M7 32h16M23 2v9a2 2 0 0 0 2 2h5a2 2 0 0 0 2-2V2zM23 6h9M27.500 13v19" fill="none" stroke="#fff" stroke-width="2.200"/></svg>
    <svg class="t5" width="34" height="30" viewBox="0 0 34 30"><path d="M2 10v10h5l8 7V3L7 10zM20 10q3 5 0 10M24 6q6 9 0 18M28 3q8 12 0 24" fill="none" stroke="#fff" stroke-width="2.200"/></svg>
    <span class="lines right"><span>11:58 AM</span><span>8/30/2025</span></span>
  </div>
</footer>
</body>
</html>
```
FILE: styles.css
```css
* { box-sizing: border-box; }
body { margin: 0; width: 3840px; height: 2160px; overflow: hidden; display: flex; flex-direction: column; background: #2b2928; font-family: Inter, sans-serif; }
svg { display: block; flex: none; overflow: visible; }
.defs { position: absolute; }
i, em { font-style: normal; }
.coral { color: #d97757; }
.white { color: #fff; }

.windows { display: grid; grid-template-columns: 1922px 1918px; height: 2066px; }
.win { display: flex; flex-direction: column; min-height: 0; height: 2066px; border-top: 2px solid #747170; border-bottom: 3px solid #6c6b69; }
.browser { border-left: 2px solid #6c6b69; border-right: 3px solid #747376; background: #2b2b2b; font-family: "Open Sans", sans-serif; color: #cfcfcf; }
.desktop { border-right: 2px solid #747170; background: #faf9f5; position: relative; }
.desktop::before { content: ""; position: absolute; left: 0; top: 0; bottom: 0; width: 90px; z-index: 3; background: linear-gradient(to right, rgba(0,0,0,.2), rgba(0,0,0,.1) 18px, rgba(0,0,0,.025) 50px, transparent); -webkit-mask-image: linear-gradient(to bottom, rgba(0,0,0,.3), #000 1200px); mask-image: linear-gradient(to bottom, rgba(0,0,0,.3), #000 1200px); }

/* tab strip */
.tabs { display: flex; height: 78px; padding-left: 19px; flex: none; }
.tab { width: 150px; height: 78px; display: flex; align-items: center; font-size: 24px; letter-spacing: -.7px; }
.tab::after { content: ""; width: 3px; height: 32px; background: #454545; border-radius: 2px; margin-left: auto; }
.tab.last::after { display: none; }
.tab .fav { width: 32px; margin: 0 16px 0 21px; }
.tab span { width: 58px; overflow: hidden; white-space: nowrap; -webkit-mask-image: linear-gradient(to right, #000 55%, transparent); mask-image: linear-gradient(to right, #000 55%, transparent); }
.tab-active { position: relative; width: 135px; height: 68px; margin: 10px 0 0 6px; background: #3c3c3c; border-radius: 18px 18px 0 0; display: flex; align-items: center; padding: 0 0 10px 16px; font-size: 24px; color: #eee; }
.tab-active::before, .tab-active::after { content: ""; position: absolute; bottom: 0; width: 22px; height: 22px; }
.tab-active::before { left: -22px; background: radial-gradient(circle at 0 0, transparent 21.500px, #3c3c3c 22px); }
.tab-active::after { right: -22px; background: radial-gradient(circle at 100% 0, transparent 21.500px, #3c3c3c 22px); }
.tab-active span { width: 9px; overflow: hidden; margin: 0 22px 0 17px; }
.newtab { margin: 29px 0 0 30px; }
.spark { width: 56px; height: 56px; margin: 10px 0 0 138px; border-radius: 28px; background: #3f3f3f; display: flex; align-items: center; justify-content: center; }
.tabsep { width: 3px; height: 32px; margin: 22px 0 0 19px; background: #454545; }
.caption { display: flex; gap: 71px; }
.tabs .caption { margin: 29px 0 0 52px; }

/* toolbar */
.toolbar { display: flex; align-items: center; height: 92px; padding-left: 8px; background: #3c3c3c; border-radius: 18px 18px 0 0; flex: none; }
.nav { width: 72px; display: flex; justify-content: center; flex: none; }
.omnibox { width: 1219px; height: 68px; margin-left: 16px; border-radius: 34px; background: #282828; display: flex; align-items: center; padding-left: 10px; }
.site { width: 48px; height: 48px; border-radius: 50%; background: #3c3c3c; display: flex; align-items: center; justify-content: center; margin-right: 17px; }
.url { width: 1016px; font-size: 26px; letter-spacing: .45px; color: #c7c7c7; white-space: nowrap; }
.url b { font-weight: 400; color: #f2f2f2; }
.install { margin-right: 31px; }
.ext { margin-left: 17px; }
.puzzle { margin-left: 2px; }
.sep { width: 3px; height: 32px; background: #5f5f5f; border-radius: 2px; }
.s1 { margin-left: 14px; }
.lens { margin-left: 17px; }
.s2 { margin-left: 16px; }
.avatar { margin-left: 33px; }
.tiny { font: 400 8px "Open Sans", sans-serif; fill: #eee; text-anchor: middle; }
.dots { margin-left: 48px; }

.bookmarks { display: grid; grid-template-columns: 129px 59px 32px 137px 184px 132px 161px 173px 160px 459px 35px 1fr; align-items: center; height: 70px; padding: 0 0 12px 27px; background: #3c3c3c; border-bottom: 2px solid #4b4b49; flex: none; }
.bm { display: flex; align-items: center; gap: 16px; font-size: 23px; letter-spacing: -.05px; white-space: nowrap; }
.bm.g13 { gap: 13px; }
.bm.g12 { gap: 12px; }

/* chat page */
.page { position: relative; flex: 1; min-height: 0; display: flex; flex-direction: column; font-family: Inter, sans-serif; }
.dark { background: #262624; color: #faf9f5; }
.light { background: #faf9f5; color: #141413; }
.head { flex: none; display: flex; align-items: center; }
.head h1 { margin: 0 15px 0 33px; font-size: 31px; font-weight: 400; letter-spacing: .5px; line-height: 40px; white-space: nowrap; }
.share { margin-left: auto; height: 64px; border: 2px solid; border-radius: 14px; font-size: 24.500px; font-weight: 600; display: flex; align-items: center; justify-content: center; }
.dark .head { height: 84px; padding: 13px 25px 0 32px; }
.dark .ic { color: #c2c0b6; }
.dark .share { width: 128px; border-color: #3a3a38; color: #8b8a84; }
.light .head { height: 98px; padding: 0 21px 0 31px; }
.light .ic { color: #3d3d3a; }
.light .share { width: 128px; border-width: 1.500px; border-color: #b5b4af; }

.chat { flex: 1; min-height: 0; overflow: hidden; position: relative; }
.dark .chat { padding: 4px 0 0 244px; }
.dark .chat::before { content: ""; position: absolute; left: 0; top: 0; width: 1880px; height: 60px; background: linear-gradient(to bottom, #262624 10%, rgba(38,38,36,0)); }
.light .chat { padding: 49px 0 0 229px; }
.prose { font-family: "Liberation Serif", serif; font-size: 35.500px; line-height: 52.800px; letter-spacing: .45px; word-spacing: -1.500px; white-space: nowrap; }
.prose .tight { word-spacing: -2.200px; }
.prose .open { word-spacing: -.600px; }
.prose .opener { word-spacing: 0; }
.prose p { margin: 0 0 20px; }
.prose p:last-child { margin-bottom: 0; }
.prose ul { margin: 0 0 20px; padding: 0; list-style: none; display: grid; row-gap: 12.200px; }
.prose li { display: flex; align-items: center; padding-left: 18px; }
.prose li::before { content: ""; width: 7px; height: 7px; border-radius: 50%; background: #faf9f5; margin: 8px 15px 0 0; }
.feedback { display: flex; width: 1409px; margin-top: 64px; }
.fb-right { margin-left: auto; display: flex; flex-direction: column; align-items: flex-end; }
.actions { display: flex; align-items: center; height: 34px; color: #c2c0b6; font-size: 29px; margin-top: -5px; }
.actions svg + svg { margin-left: 36px; }
.actions span { margin-left: 36px; letter-spacing: .5px; }
.disclaimer { margin-top: 18px; font-size: 23px; line-height: 34px; letter-spacing: -.46px; color: #8b8a84; }

.think { width: 1440px; height: 86px; border: 2px solid #e1e0db; border-radius: 16px; display: flex; align-items: center; justify-content: space-between; padding: 0 29px 0 24px; font-size: 28px; letter-spacing: .15px; color: #3d3d3a; }
.light .prose { padding: 21px 0 0 16px; }
.bubble { width: 822px; height: 97px; margin-top: 99px; border-radius: 24px; background: #f0eee6; display: flex; align-items: center; padding-left: 20px; font-size: 29.500px; letter-spacing: -.23px; white-space: nowrap; }
.who { width: 56px; height: 56px; border-radius: 50%; background: #5645a1; color: #fff; font-size: 25px; font-weight: 700; letter-spacing: 0; display: flex; align-items: center; justify-content: center; margin-right: 17px; }
.think.second { margin-top: 48px; }
.jump { position: absolute; left: 913px; top: 1565px; width: 72px; height: 72px; border-radius: 50%; background: #fff; border: 2px solid #e1e0db; box-shadow: 0 6px 14px rgba(0,0,0,.12); display: flex; align-items: center; justify-content: center; }

.composer { flex: none; width: 1506px; height: 202px; border: 2px solid; border-radius: 32px; padding: 31px 29px 0; position: relative; }
.dark .composer { margin: 0 0 16px 195px; background: #30302e; border-color: #3e3e3b; }
.light .composer { margin: 0 0 14px 196px; background: #fff; border-color: #dfded9; box-shadow: 0 6px 36px rgba(0,0,0,.06); }
.ph { font-size: 31px; line-height: 44px; letter-spacing: -.2px; padding-left: 1px; }
.dark .ph { color: #9c9a92; }
.light .ph { color: #73726c; }
.tools { display: flex; align-items: center; margin-top: 31px; height: 64px; }
.tb { width: 64px; height: 64px; border: 2px solid; border-radius: 16px; display: flex; align-items: center; justify-content: center; margin-right: 16px; font-size: 24px; letter-spacing: -.2px; }
.tb.wide { width: 178px; gap: 9px; }
.dark .tb { border-color: #484846; color: #c2c0b6; }
.light .tb { border-color: #e1e0db; color: #3d3d3a; }
.dark .tb.on { background: #2b3541; border-color: #2d435b; color: #2f86dc; }
.light .tb.on { background: #edf5fd; border-color: #cfe1f3; color: #2f7fd0; }
.model { margin-left: auto; font-family: "Liberation Serif", serif; font-size: 31px; letter-spacing: .35px; white-space: nowrap; }
.dark .model { color: #c9c7be; -webkit-text-stroke: .5px #c9c7be; }
.light .model { color: #52514c; letter-spacing: 0; }
.light .model em { -webkit-text-stroke: .8px #3d3d3a; color: #3d3d3a; }
.mchev { margin: 3px 36px 0 9px; color: #8b8a84; }
.send { width: 64px; height: 64px; border-radius: 16px; display: flex; align-items: center; justify-content: center; }
.dark .send { background: #7c4a38; color: #b0a49c; }
.light .send { background: #e3b19f; color: #fff; }

.scroll { position: absolute; top: 0; right: 5px; bottom: 0; width: 12px; }
.scroll i { position: absolute; left: 0; width: 12px; border-radius: 6px; }
.scroll b { position: absolute; left: 0; width: 12px; height: 10px; bottom: 5px; clip-path: polygon(0 0, 100% 0, 50% 100%); }
.dark .scroll i { top: 1758px; height: 40px; background: #6c6b65; }
.dark .scroll b { background: #6c6b65; }
.light .scroll { right: 1px; }
.light .scroll i { top: 1002px; height: 376px; background: #9a9994; }
.light .scroll b { background: #aaa9a4; }

/* desktop app title bar */
.titlebar { flex: none; height: 72px; display: flex; align-items: center; padding: 0 36px 2px 27px; border-bottom: 2px solid #dddcd7; }
.titlebar .coral { margin-left: 29px; }
.apptitle { width: 340px; margin-left: 684px; font-size: 24px; font-weight: 600; letter-spacing: -.33px; color: #9a9994; white-space: nowrap; }
.titlebar .caption { margin-left: auto; }

/* taskbar */
.taskbar { height: 94px; display: flex; align-items: center; padding-left: 41px; background: linear-gradient(to right, #2c2a29, #2b2928 50%, #2f2a27 62%, #282728 80%); font-family: "Open Sans", sans-serif; color: #fff; font-size: 23px; letter-spacing: -.1px; }
.search { width: 196px; height: 60px; margin-left: 31px; border-radius: 30px; background: #f3f3f3; color: #1b1b1b; display: flex; align-items: center; gap: 11px; padding-left: 44px; }
.apps { display: grid; grid-template-columns: repeat(16, 88px); margin-left: 8px; height: 94px; }
.app { display: flex; align-items: center; justify-content: center; position: relative; }
.app.dot::after, .app.wide-dot::after { content: ""; position: absolute; left: 38px; bottom: 9px; width: 12px; height: 6px; border-radius: 3px; background: #9b9a99; }
.app.wide-dot::after { left: 31px; width: 26px; }
.sonos { width: 48px; height: 48px; background: #474747; display: flex; flex-direction: column; align-items: center; justify-content: center; font: 700 9.500px/10px Lato, sans-serif; letter-spacing: .4px; color: #eee; }
.sonos small { font-size: 7px; }
.letter { font: 400 16px "Open Sans", sans-serif; fill: #fff; text-anchor: middle; }
.widget { display: flex; align-items: center; margin-left: 1351px; width: 312px; }
.runner { position: relative; width: 49px; height: 94px; padding: 30px 0 0 0; }
.runner i { position: absolute; left: 10px; top: 11px; width: 32px; height: 32px; border-radius: 50%; background: #c42b1c; text-align: center; font-size: 20px; line-height: 31px; }
.lines { display: flex; flex-direction: column; line-height: 32px; white-space: nowrap; letter-spacing: .4px; }
.lines .dim { color: #c9c9c9; font-size: 23.500px; letter-spacing: .25px; }
.lines.right { align-items: flex-end; margin-left: auto; margin-right: 38px; letter-spacing: 0; }
.tray { display: flex; align-items: center; flex: 1; }
.t2 { margin-left: 38px; }
.t3 { margin-left: 34px; }
.t4 { margin-left: 31px; }
.t5 { margin-left: 14px; }
```
